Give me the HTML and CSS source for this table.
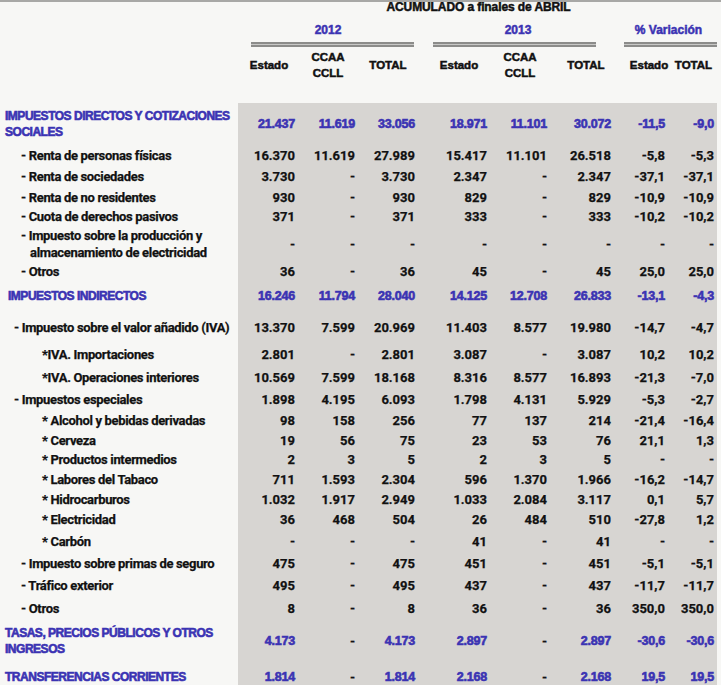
FILE: index.html
```html
<!DOCTYPE html>
<html lang="es">
<head>
<meta charset="utf-8">
<title>Recaudación acumulada a finales de abril</title>
<link rel="stylesheet" href="styles.css">
</head>
<body>
<div class="head">
  <div class="title">ACUMULADO a finales de ABRIL</div>

  <div class="year y12">2012</div>
  <div class="year y13">2013</div>
  <div class="year yvar">% Variación</div>

  <div class="dbl d12"></div>
  <div class="dbl d13"></div>
  <div class="dbl dvar"></div>

  <div class="sub c1">Estado</div>
  <div class="sub c2">CCAA<br>CCLL</div>
  <div class="sub c3">TOTAL</div>
  <div class="sub c4">Estado</div>
  <div class="sub c5">CCAA<br>CCLL</div>
  <div class="sub c6">TOTAL</div>
  <div class="sub c7">Estado</div>
  <div class="sub c8">TOTAL</div>
</div>

<div class="sheet">
  <div class="row main"><div class="lbl l0">IMPUESTOS DIRECTOS Y COTIZACIONES<br>SOCIALES</div><div class="n">21.437</div><div class="n">11.619</div><div class="n">33.056</div><div class="n">18.971</div><div class="n">11.101</div><div class="n">30.072</div><div class="n">-11,5</div><div class="n">-9,0</div></div>
  <div class="row"><div class="lbl l2">- Renta de personas físicas</div><div class="n">16.370</div><div class="n">11.619</div><div class="n">27.989</div><div class="n">15.417</div><div class="n">11.101</div><div class="n">26.518</div><div class="n">-5,8</div><div class="n">-5,3</div></div>
  <div class="row"><div class="lbl l2">- Renta de sociedades</div><div class="n">3.730</div><div class="n">-</div><div class="n">3.730</div><div class="n">2.347</div><div class="n">-</div><div class="n">2.347</div><div class="n">-37,1</div><div class="n">-37,1</div></div>
  <div class="row"><div class="lbl l2">- Renta de no residentes</div><div class="n">930</div><div class="n">-</div><div class="n">930</div><div class="n">829</div><div class="n">-</div><div class="n">829</div><div class="n">-10,9</div><div class="n">-10,9</div></div>
  <div class="row"><div class="lbl l2">- Cuota de derechos pasivos</div><div class="n">371</div><div class="n">-</div><div class="n">371</div><div class="n">333</div><div class="n">-</div><div class="n">333</div><div class="n">-10,2</div><div class="n">-10,2</div></div>
  <div class="row"><div class="lbl l2 wrap">- Impuesto sobre la producción y<br><span class="cont">almacenamiento de electricidad</span></div><div class="n">-</div><div class="n">-</div><div class="n">-</div><div class="n">-</div><div class="n">-</div><div class="n">-</div><div class="n">-</div><div class="n">-</div></div>
  <div class="row"><div class="lbl l2">- Otros</div><div class="n">36</div><div class="n">-</div><div class="n">36</div><div class="n">45</div><div class="n">-</div><div class="n">45</div><div class="n">25,0</div><div class="n">25,0</div></div>
  <div class="row main"><div class="lbl l0b">IMPUESTOS INDIRECTOS</div><div class="n">16.246</div><div class="n">11.794</div><div class="n">28.040</div><div class="n">14.125</div><div class="n">12.708</div><div class="n">26.833</div><div class="n">-13,1</div><div class="n">-4,3</div></div>
  <div class="row"><div class="lbl l1">- Impuesto sobre el valor añadido (IVA)</div><div class="n">13.370</div><div class="n">7.599</div><div class="n">20.969</div><div class="n">11.403</div><div class="n">8.577</div><div class="n">19.980</div><div class="n">-14,7</div><div class="n">-4,7</div></div>
  <div class="row"><div class="lbl l3">*IVA. Importaciones</div><div class="n">2.801</div><div class="n">-</div><div class="n">2.801</div><div class="n">3.087</div><div class="n">-</div><div class="n">3.087</div><div class="n">10,2</div><div class="n">10,2</div></div>
  <div class="row"><div class="lbl l3">*IVA. Operaciones interiores</div><div class="n">10.569</div><div class="n">7.599</div><div class="n">18.168</div><div class="n">8.316</div><div class="n">8.577</div><div class="n">16.893</div><div class="n">-21,3</div><div class="n">-7,0</div></div>
  <div class="row"><div class="lbl l1">- Impuestos especiales</div><div class="n">1.898</div><div class="n">4.195</div><div class="n">6.093</div><div class="n">1.798</div><div class="n">4.131</div><div class="n">5.929</div><div class="n">-5,3</div><div class="n">-2,7</div></div>
  <div class="row"><div class="lbl l3">* Alcohol y bebidas derivadas</div><div class="n">98</div><div class="n">158</div><div class="n">256</div><div class="n">77</div><div class="n">137</div><div class="n">214</div><div class="n">-21,4</div><div class="n">-16,4</div></div>
  <div class="row"><div class="lbl l3">* Cerveza</div><div class="n">19</div><div class="n">56</div><div class="n">75</div><div class="n">23</div><div class="n">53</div><div class="n">76</div><div class="n">21,1</div><div class="n">1,3</div></div>
  <div class="row"><div class="lbl l3">* Productos intermedios</div><div class="n">2</div><div class="n">3</div><div class="n">5</div><div class="n">2</div><div class="n">3</div><div class="n">5</div><div class="n">-</div><div class="n">-</div></div>
  <div class="row"><div class="lbl l3">* Labores del Tabaco</div><div class="n">711</div><div class="n">1.593</div><div class="n">2.304</div><div class="n">596</div><div class="n">1.370</div><div class="n">1.966</div><div class="n">-16,2</div><div class="n">-14,7</div></div>
  <div class="row"><div class="lbl l3">* Hidrocarburos</div><div class="n">1.032</div><div class="n">1.917</div><div class="n">2.949</div><div class="n">1.033</div><div class="n">2.084</div><div class="n">3.117</div><div class="n">0,1</div><div class="n">5,7</div></div>
  <div class="row"><div class="lbl l3">* Electricidad</div><div class="n">36</div><div class="n">468</div><div class="n">504</div><div class="n">26</div><div class="n">484</div><div class="n">510</div><div class="n">-27,8</div><div class="n">1,2</div></div>
  <div class="row"><div class="lbl l3">* Carbón</div><div class="n">-</div><div class="n">-</div><div class="n">-</div><div class="n">41</div><div class="n">-</div><div class="n">41</div><div class="n">-</div><div class="n">-</div></div>
  <div class="row"><div class="lbl l2">- Impuesto sobre primas de seguro</div><div class="n">475</div><div class="n">-</div><div class="n">475</div><div class="n">451</div><div class="n">-</div><div class="n">451</div><div class="n">-5,1</div><div class="n">-5,1</div></div>
  <div class="row"><div class="lbl l2">- Tráfico exterior</div><div class="n">495</div><div class="n">-</div><div class="n">495</div><div class="n">437</div><div class="n">-</div><div class="n">437</div><div class="n">-11,7</div><div class="n">-11,7</div></div>
  <div class="row"><div class="lbl l2">- Otros</div><div class="n">8</div><div class="n">-</div><div class="n">8</div><div class="n">36</div><div class="n">-</div><div class="n">36</div><div class="n">350,0</div><div class="n">350,0</div></div>
  <div class="row main"><div class="lbl l0">TASAS, PRECIOS PÚBLICOS Y OTROS<br>INGRESOS</div><div class="n">4.173</div><div class="n dash">-</div><div class="n">4.173</div><div class="n">2.897</div><div class="n dash">-</div><div class="n">2.897</div><div class="n">-30,6</div><div class="n">-30,6</div></div>
  <div class="row main"><div class="lbl l0">TRANSFERENCIAS CORRIENTES</div><div class="n">1.814</div><div class="n dash">-</div><div class="n">1.814</div><div class="n">2.168</div><div class="n dash">-</div><div class="n">2.168</div><div class="n">19,5</div><div class="n">19,5</div></div>
</div>
</body>
</html>
```

FILE: styles.css
```css
html, body {
  margin: 0;
  padding: 0;
}
body {
  background: #f7f7f5;
  border-top: 2px solid #a8a8a6;
  height: 683px;
  overflow: hidden;
  color: #111;
  font-family: Roboto, "Liberation Sans", sans-serif;
}
.head,
.sheet {
  display: grid;
  grid-template-columns: 238px 60px 60px 60px 72px 60px 64px 54px 49px;
}
.head {
  grid-template-rows: 11px 27px 10px 30px 23px;
}
.sheet {
  grid-template-rows:
    42px 21px 21px 20px 19px 36px 18px 32px 31px 23px 23px 21px 20px 20px 19px 20px 20px 21px 22px 22px 23px 23px 42px 30px;
}
.row { display: contents; }

/* header */
.title {
  grid-row: 1;
  grid-column: 2 / 10;
  text-align: center;
  font-family: "Liberation Sans", Arial, sans-serif;
  font-weight: 700;
  font-size: 12px;
  line-height: 11px;
  -webkit-text-stroke: 0.5px #111;
  letter-spacing: -0.1px;
  padding-left: 2px;
}
.year {
  grid-row: 2;
  display: flex;
  align-items: flex-end;
  justify-content: center;
  padding-bottom: 3px;
  color: #3b33b3;
  font-family: "Liberation Sans", Arial, sans-serif;
  font-weight: 700;
  font-size: 12px;
  -webkit-text-stroke: 0.5px #3b33b3;
}
.y12 { grid-column: 2 / 5; }
.y13 { grid-column: 5 / 8; padding-left: 4px; }
.yvar { grid-column: 8 / 10; padding-left: 6px; }

.dbl {
  grid-row: 3;
  align-self: center;
  height: 1px;
  border-top: 2px solid #8c8c8a;
  border-bottom: 2px solid #8c8c8a;
  background: #c8c8c6;
  margin-top: -2px;
}
.d12 { grid-column: 2 / 5; margin-left: 13px; margin-right: 4px; }
.d13 { grid-column: 5 / 8; margin-left: 15px; margin-right: 18px; }
.dvar { grid-column: 8 / 10; margin-left: 10px; margin-right: 0; }

.sub {
  grid-row: 4;
  display: flex;
  align-items: center;
  justify-content: center;
  text-align: center;
  font-family: "Liberation Sans", Arial, sans-serif;
  font-weight: 700;
  font-size: 11.5px;
  line-height: 16px;
  -webkit-text-stroke: 0.5px #111;
}
.c1 { grid-column: 2; padding-left: 2px; }
.c2 { grid-column: 3; }
.c3 { grid-column: 4; }
.c4 { grid-column: 5; padding-left: 10px; }
.c5 { grid-column: 6; }
.c6 { grid-column: 7; padding-left: 8px; }
.c7 { grid-column: 8; padding-left: 16px; }
.c8 { grid-column: 9; padding-left: 2px; }

/* body */
.lbl {
  display: flex;
  align-items: center;
  font-weight: 700;
  font-size: 13px;
  line-height: 17px;
  letter-spacing: -0.33px;
  white-space: nowrap;
  -webkit-text-stroke: 0.25px #111;
}
.lbl.wrap { display: block; align-self: center; }
.cont { padding-left: 9px; }
.l0 { padding-left: 5px; }
.l0b { padding-left: 8px; }
.l1 { padding-left: 14px; }
.l2 { padding-left: 21px; }
.l3 { padding-left: 42px; }

.n {
  display: flex;
  align-items: center;
  justify-content: flex-end;
  padding-right: 3px;
  background: #d7d5d2;
  font-weight: 700;
  font-size: 13px;
  -webkit-text-stroke: 0.25px #111;
}

.main .lbl,
.main .n {
  color: #3b33b3;
  font-family: "Liberation Sans", Arial, sans-serif;
  font-size: 12px;
  -webkit-text-stroke: 0.6px #3b33b3;
}
.main .n { font-size: 12.5px; letter-spacing: -0.2px; }
.main .lbl { line-height: 16px; letter-spacing: -0.48px; }
.main .n.dash {
  color: #111;
  -webkit-text-stroke: 0.25px #111;
  font-family: Roboto, sans-serif;
  font-size: 13px;
  letter-spacing: 0;
}
```
